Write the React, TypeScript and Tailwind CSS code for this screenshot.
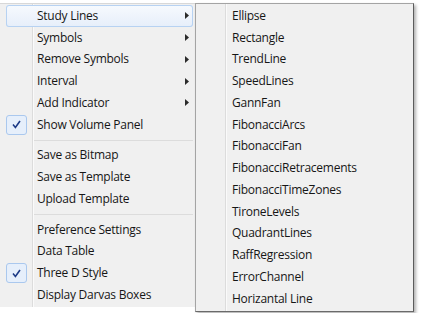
import React from "react";

type Item = { label: string; arrow?: boolean; checked?: boolean; active?: boolean } | "sep";

const MAIN: Item[] = [
  { label: "Study Lines", arrow: true, active: true },
  { label: "Symbols", arrow: true },
  { label: "Remove Symbols", arrow: true },
  { label: "Interval", arrow: true },
  { label: "Add Indicator", arrow: true },
  { label: "Show Volume Panel", checked: true },
  "sep",
  { label: "Save as Bitmap" },
  { label: "Save as Template" },
  { label: "Upload Template" },
  "sep",
  { label: "Preference Settings" },
  { label: "Data Table" },
  { label: "Three D Style", checked: true },
  { label: "Display Darvas Boxes" },
];

const STUDY = [
  "Ellipse",
  "Rectangle",
  "TrendLine",
  "SpeedLines",
  "GannFan",
  "FibonacciArcs",
  "FibonacciFan",
  "FibonacciRetracements",
  "FibonacciTimeZones",
  "TironeLevels",
  "QuadrantLines",
  "RaffRegression",
  "ErrorChannel",
  "Horizantal Line",
];

function Arrow() {
  return (
    <svg width="4" height="7" viewBox="0 0 4 7" className="ml-auto mr-[4px] shrink-0">
      <path d="M0 0 L4 3.5 L0 7 Z" fill="#2b2b2b" />
    </svg>
  );
}

function CheckBox({ on }: { on?: boolean }) {
  if (!on) return <div className="w-[21px] shrink-0" />;
  return (
    <div className="flex h-[20px] w-[21px] shrink-0 items-center justify-center rounded-[3px] border border-[#aac8ee] bg-[#e6effb]">
      <svg width="9" height="9" viewBox="0 0 9 9">
        <path d="M1 4.6 L3.4 7.4 L8 1" fill="none" stroke="#1c3a86" strokeWidth="1.6" />
      </svg>
    </div>
  );
}

function MainMenu() {
  return (
    <div className="w-[195px] shrink-0 border-t border-[#d8d8d8] bg-[linear-gradient(to_right,#f0f0f0_32px,#dcdcdc_32px,#dcdcdc_33px,#fafafa_33px,#fafafa_34px,#f0f0f0_34px)] py-[1px]">
      {MAIN.map((it, i) =>
        it === "sep" ? (
          <div key={i} className="flex h-[9px] items-center pl-[34px] pr-[2px]">
            <div className="h-[1px] w-full bg-[#dcdcdc]" />
          </div>
        ) : (
          <div
            key={i}
            className={
              "ml-[6px] mr-[2px] flex h-[21.75px] items-center " +
              (it.active
                ? "rounded-[3px] bg-gradient-to-b from-[#f7fafe] to-[#e6eefa] ring-1 ring-inset ring-[#b7d2f2]"
                : "")
            }
          >
            <CheckBox on={it.checked} />
            <span className="ml-[10px]">{it.label}</span>
            {it.arrow && <Arrow />}
          </div>
        )
      )}
    </div>
  );
}

function StudyMenu() {
  return (
    <div className="w-[219px] shrink-0 border border-[#a4a4a4] border-r-[#5c5c5c] border-b-[#6a6a6a] bg-[linear-gradient(to_right,#f0f0f0_29px,#dcdcdc_29px,#dcdcdc_30px,#fafafa_30px,#fafafa_31px,#f0f0f0_31px)] py-[1px] shadow-[2px_2px_3px_rgba(0,0,0,0.3)]">
      {STUDY.map((s) => (
        <div key={s} className="flex h-[21.75px] items-center pl-[36px]">
          {s}
        </div>
      ))}
    </div>
  );
}

export default function App() {
  return (
    <div
      className="h-[313px] w-[422px] overflow-hidden bg-white pt-[3px] text-[12px] tracking-[-0.25px] text-[#161616]"
      style={{ fontFamily: '"Segoe UI", "Open Sans", sans-serif' }}
    >
      <div className="flex items-start">
        <MainMenu />
        <StudyMenu />
      </div>
    </div>
  );
}
